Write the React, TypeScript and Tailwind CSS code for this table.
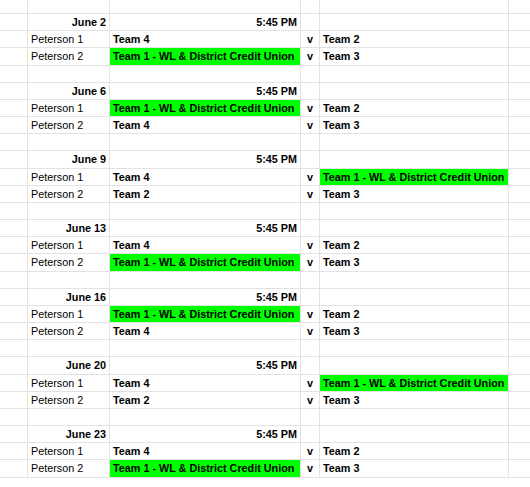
import React from "react";

type Cell = { text: string; green?: boolean };
type Row = {
  h: number;
  kind: "date" | "game" | "blank";
  date?: string;
  loc?: string;
  home?: Cell;
  away?: Cell;
};

const T1 = "Team 1 - WL & District Credit Union";

const blocks: { date: string; g: [Cell, Cell][] }[] = [
  { date: "June 2", g: [[{ text: "Team 4" }, { text: "Team 2" }], [{ text: T1, green: true }, { text: "Team 3" }]] },
  { date: "June 6", g: [[{ text: T1, green: true }, { text: "Team 2" }], [{ text: "Team 4" }, { text: "Team 3" }]] },
  { date: "June 9", g: [[{ text: "Team 4" }, { text: T1, green: true }], [{ text: "Team 2" }, { text: "Team 3" }]] },
  { date: "June 13", g: [[{ text: "Team 4" }, { text: "Team 2" }], [{ text: T1, green: true }, { text: "Team 3" }]] },
  { date: "June 16", g: [[{ text: T1, green: true }, { text: "Team 2" }], [{ text: "Team 4" }, { text: "Team 3" }]] },
  { date: "June 20", g: [[{ text: "Team 4" }, { text: T1, green: true }], [{ text: "Team 2" }, { text: "Team 3" }]] },
  { date: "June 23", g: [[{ text: "Team 4" }, { text: "Team 2" }], [{ text: T1, green: true }, { text: "Team 3" }]] },
];

const heights = [17, 17, 18, 17, 17, 17, 17, 17, 18, 17, 17, 17, 17, 17, 18, 17, 17, 17, 17, 17, 18, 17, 17, 17, 17, 17, 18];

const rows: Row[] = [];
blocks.forEach((b, bi) => {
  rows.push({ h: 0, kind: "date", date: b.date });
  rows.push({ h: 0, kind: "game", loc: "Peterson 1", home: b.g[0][0], away: b.g[0][1] });
  rows.push({ h: 0, kind: "game", loc: "Peterson 2", home: b.g[1][0], away: b.g[1][1] });
  if (bi < blocks.length - 1) rows.push({ h: 0, kind: "blank" });
});
rows.forEach((r, i) => (r.h = heights[i]));

const hClass: Record<number, string> = {
  14: "h-[14px]",
  16: "h-[16px]",
  17: "h-[17px]",
  18: "h-[18px]",
};

const cellBase = "border-r border-[#e2e2e2] px-[3px] whitespace-nowrap overflow-hidden";

function GridRow({ row }: { row: Row }) {
  const h = hClass[row.h];
  return (
    <div className={`flex ${h} border-b border-[#e2e2e2] leading-[16px]`}>
      <div className={`w-[28px] shrink-0 ${cellBase}`} />
      <div className={`w-[82px] shrink-0 ${cellBase} ${row.kind === "date" ? "text-right font-bold" : ""}`}>
        {row.kind === "date" ? row.date : row.kind === "game" ? row.loc : ""}
      </div>
      <div
        className={`w-[191px] shrink-0 ${cellBase} font-bold ${row.kind === "date" ? "text-right" : ""} ${
          row.home?.green ? "bg-[#00ff00]" : ""
        }`}
      >
        {row.kind === "date" ? "5:45 PM" : row.kind === "game" ? row.home?.text : ""}
      </div>
      <div className={`w-[19px] shrink-0 ${cellBase} text-center font-bold px-0`}>
        {row.kind === "game" ? "v" : ""}
      </div>
      <div className={`w-[189px] shrink-0 ${cellBase} font-bold ${row.away?.green ? "bg-[#00ff00]" : ""}`}>
        {row.kind === "game" ? row.away?.text : ""}
      </div>
      <div className="flex-1" />
    </div>
  );
}

export default function App() {
  return (
    <div className="w-[530px] h-[487px] bg-white overflow-hidden font-['Liberation_Sans',Arial,sans-serif] text-[10.8px] text-black">
      <div className="flex h-[14px] border-b border-[#e2e2e2]">
        <div className="w-[28px] shrink-0 border-r border-[#e2e2e2]" />
        <div className="w-[82px] shrink-0 border-r border-[#e2e2e2]" />
        <div className="w-[191px] shrink-0 border-r border-[#e2e2e2]" />
        <div className="w-[19px] shrink-0 border-r border-[#e2e2e2]" />
        <div className="w-[189px] shrink-0 border-r border-[#e2e2e2]" />
        <div className="flex-1" />
      </div>
      {rows.map((r, i) => (
        <GridRow key={i} row={r} />
      ))}
    </div>
  );
}
